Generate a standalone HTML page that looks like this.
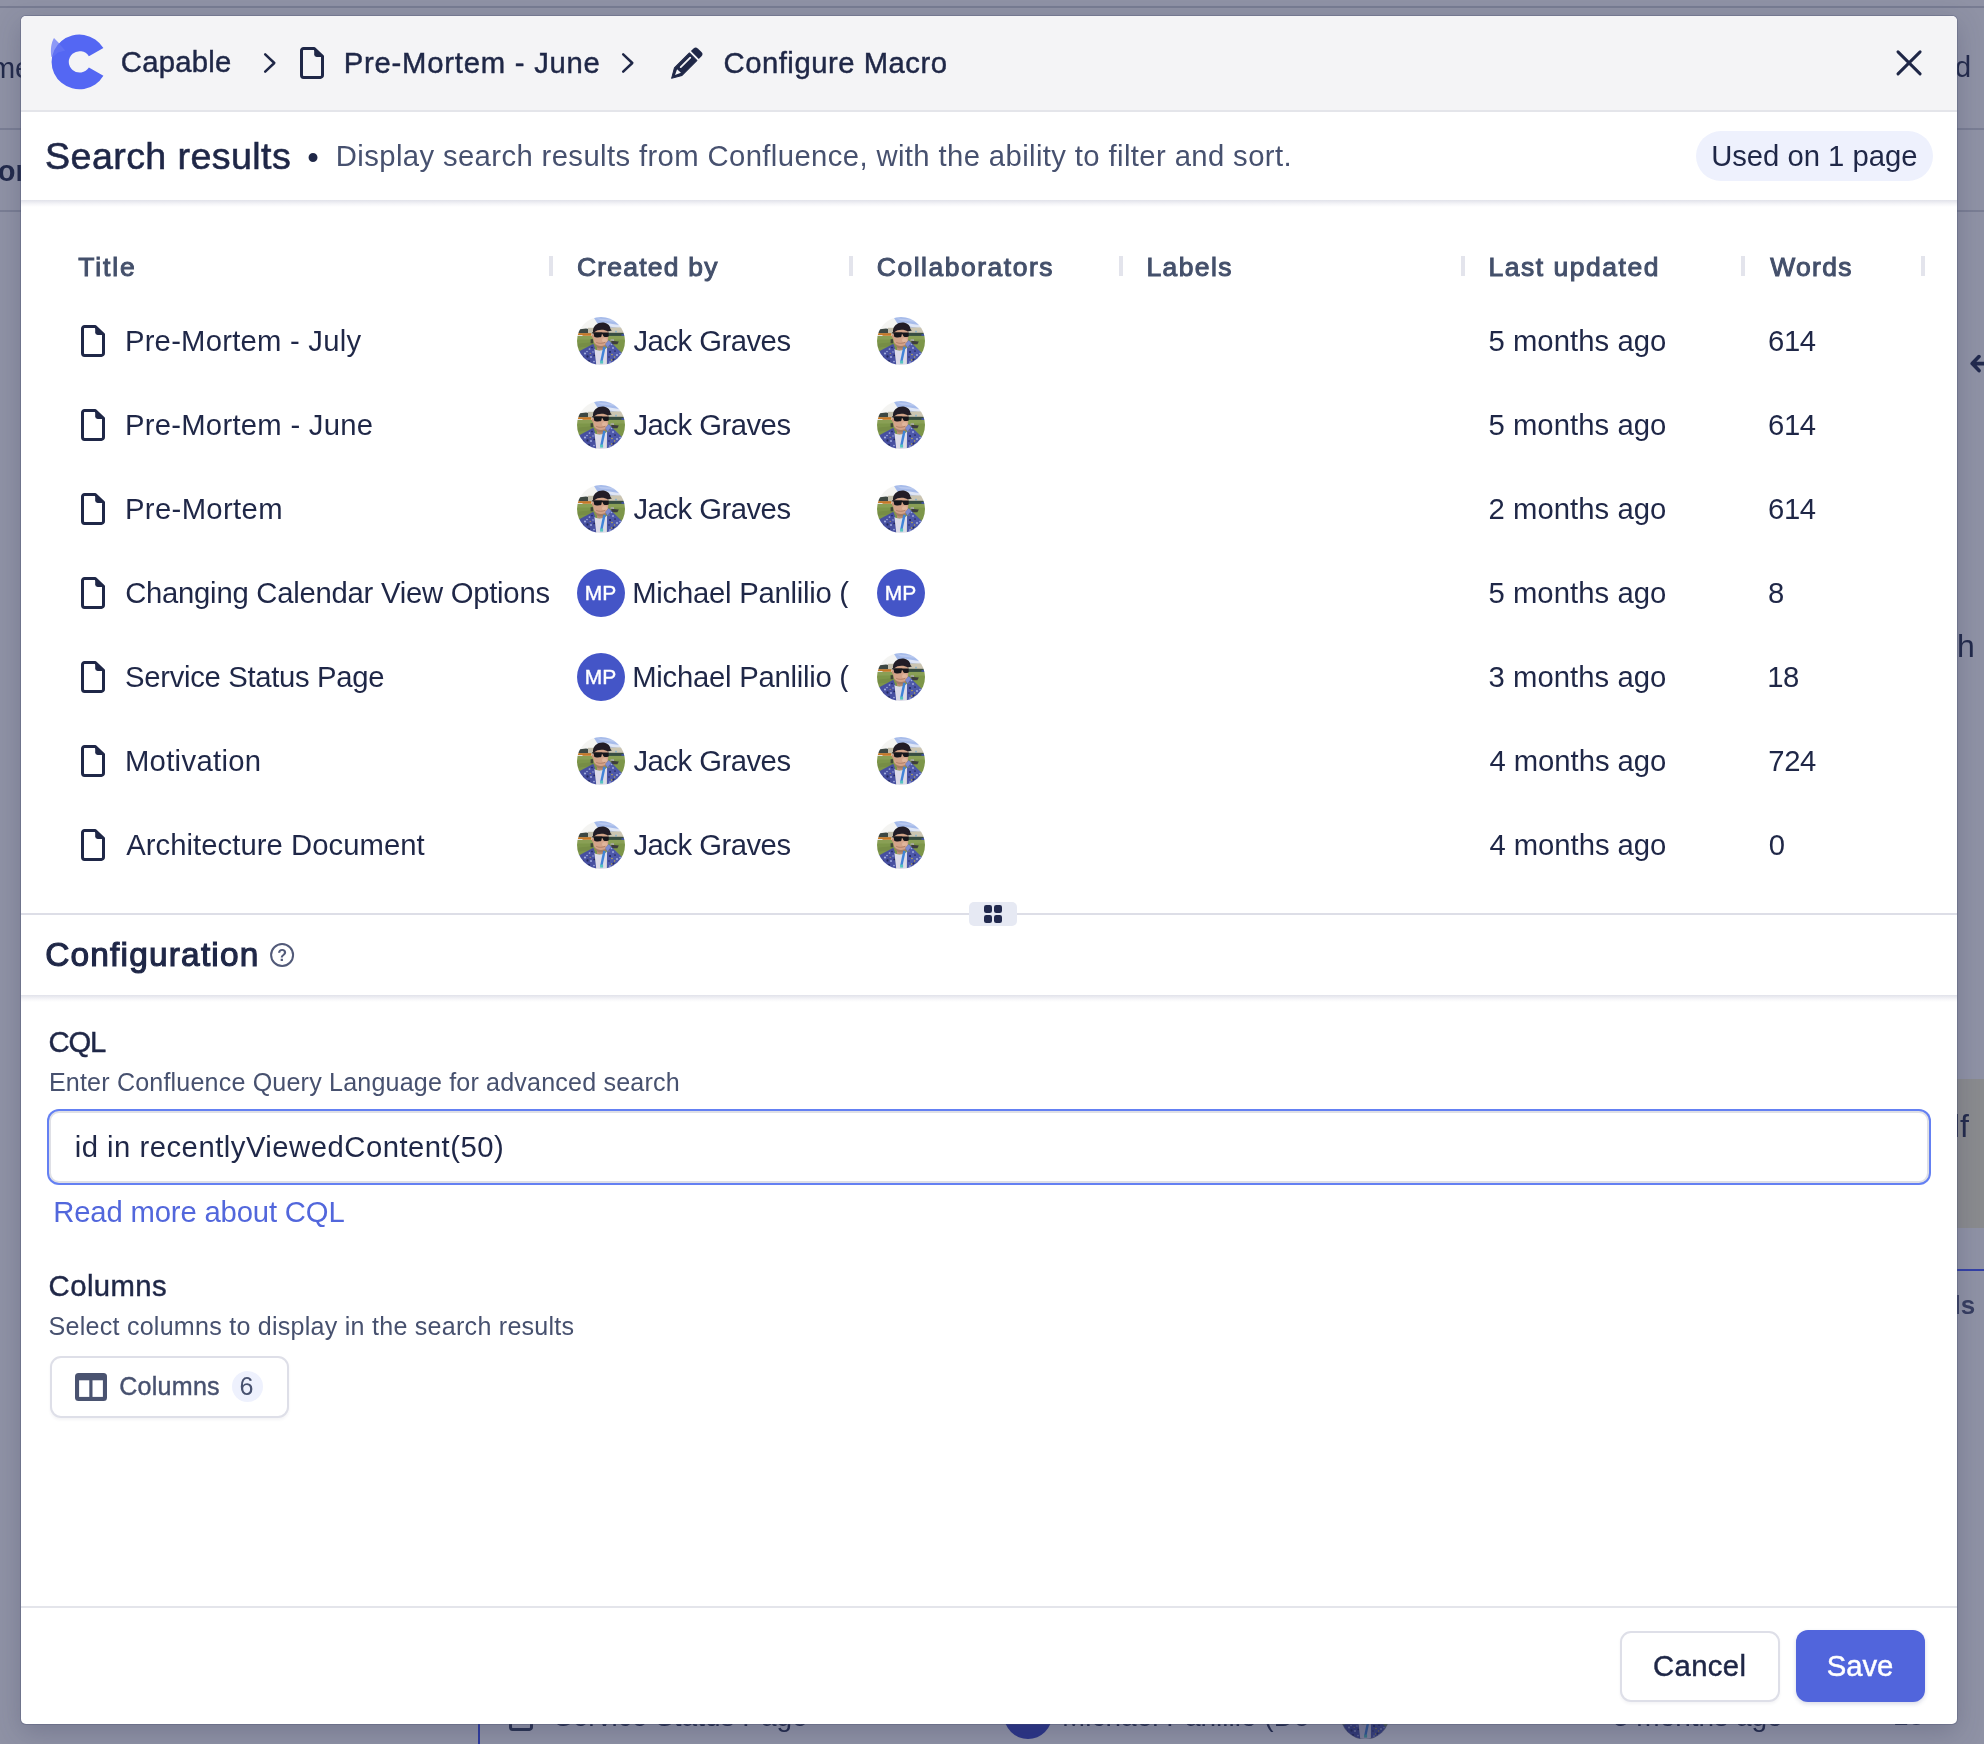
<!DOCTYPE html>
<html lang="en"><head><meta charset="utf-8"><title>Configure Macro</title>
<style>
html,body{margin:0;padding:0}
body{width:1984px;height:1744px;overflow:hidden;position:relative;background:#8f92a5;font-family:"Liberation Sans",sans-serif}
.root{position:absolute;left:0;top:0;width:1984px;height:1744px;overflow:hidden;will-change:transform}
.t{position:absolute;line-height:1;white-space:pre;display:block}
.a{position:absolute}
.modal{left:21px;top:16px;width:1936px;height:1708px;background:#fff;border-radius:5px;box-shadow:0 0 0 1px rgba(70,75,110,.3),0 8px 26px rgba(45,50,85,.26);overflow:hidden}
.hdr{left:0;top:0;width:1936px;height:94px;background:#f4f4f6;border-bottom:2px solid #e4e5ea}
.sep{width:4px;height:20px;top:256px;background:#e3e4ec}
.btn{box-sizing:border-box;border:2px solid #dedfe8;border-radius:11px;background:#fff;box-shadow:0 2px 3px rgba(30,35,70,.05)}
.mp{width:48px;height:48px;border-radius:50%;background:#4455c7}
.bgt{position:absolute;line-height:1;white-space:pre;color:#222a4b}
</style></head>
<body><div class="root">
<svg width="0" height="0" style="position:absolute">
<defs>
<symbol id="pg" viewBox="0 0 24 32">
<path d="M3.6 1.5H14.3L22.5 9.3V28.3a2.1 2.1 0 0 1-2.1 2.1H3.6a2.1 2.1 0 0 1-2.1-2.1V3.6a2.1 2.1 0 0 1 2.1-2.1Z" fill="none" stroke="#1f2747" stroke-width="3" stroke-linejoin="round"/>
<path d="M14.2 1.2L23 9.9H16.6a2.4 2.4 0 0 1-2.4-2.4Z" fill="#1f2747"/>
</symbol>
<symbol id="chev" viewBox="0 0 14 22"><path d="M2.2 2.4L11.3 11L2.2 19.6" fill="none" stroke="#1f2747" stroke-width="2.5" stroke-linecap="round" stroke-linejoin="round"/></symbol>
<clipPath id="avc"><circle cx="24" cy="24" r="24"/></clipPath>
<filter id="avb" x="-10%" y="-10%" width="120%" height="120%"><feGaussianBlur stdDeviation="0.55"/></filter>
<symbol id="av" viewBox="0 0 48 48">
<g clip-path="url(#avc)"><g filter="url(#avb)">
<rect x="-3" y="-3" width="54" height="54" fill="#f4f4f2"/>
<path d="M14.5 -3H51V14H30L22 9Z" fill="#a6bbea"/>
<path d="M26 5.5L42 8L46 10.5L44 11.5L30 9Z" fill="#dfe6f6"/>
<path d="M20 1.5L34 2.5L40 5L24 3.5Z" fill="#b9c9ef"/>
<path d="M1 12.5L9 11.6L14.6 12.4V16.6H1Z" fill="#3d4643"/>
<rect x="11" y="10.8" width="6" height="5.6" fill="#c2bdab"/>
<rect x="-3" y="16.2" width="17.5" height="2.6" fill="#c67827"/>
<rect x="-1" y="18" width="6.5" height="2.1" fill="#ececee"/>
<rect x="31" y="10.4" width="20" height="6" fill="#cbc5b1"/>
<rect x="38" y="13.8" width="2" height="1.6" fill="#8fb3c9"/>
<rect x="31" y="15.8" width="20" height="3.2" fill="#374e43"/>
<rect x="44.5" y="17" width="4" height="3.4" fill="#3c4f9a"/>
<rect x="-3" y="18.9" width="54" height="33" fill="#7d964a"/>
<path d="M-3 18.9H51V22.5H-3Z" fill="#899f54"/>
<path d="M-3 27L16 25V29L-3 31Z" fill="#768d45"/>
<path d="M33.6 22.3H37V24H33.6Z" fill="#b0b1ac"/>
<path d="M34.2 23.8L41.8 24.4L40.4 27.2H34.6Z" fill="#3c3e3d"/>
<rect x="13.6" y="22.2" width="2.6" height="4" fill="#3f4638"/>
<path d="M20 27H28V33H20Z" fill="#b98c73"/>
<path d="M16.2 13C16.2 11 31.2 11 31.2 13V21C31.2 25.5 28.5 31.2 24 31.2C19.5 31.2 16.2 25.5 16.2 21Z" fill="#d3a389"/>
<ellipse cx="27.6" cy="23.2" rx="2.6" ry="2.2" fill="#e0b59c"/>
<ellipse cx="15.8" cy="19" rx="1" ry="2" fill="#c99478"/>
<path d="M19.2 25.3C21 26.6 25.5 26.8 28.4 25.2" stroke="#a97761" stroke-width="0.8" fill="none"/>
<path d="M17.6 26C19 30.6 21.5 31.6 24 31.6C26.6 31.6 29 30 30.2 26.2C28 29.6 20.4 30 17.6 26Z" fill="#a27b65"/>
<path d="M16 15.4C14.8 3.4 32.8 2.2 33.4 12L34.8 13.6L30.8 14.4C27.4 12 20.4 12 17.4 15.2Z" fill="#201f25"/>
<path d="M15.2 15.3L24.6 15.2L26 15.6L31.8 15.5V19.2C31.8 20.2 27 20.4 26.4 19.2L25.6 17.2H24.8L24.4 19.6C24 20.8 17.6 20.8 17.2 19.4L16.6 16.6L15.2 16.4Z" fill="#19181c"/>
<path d="M-1 36L16.4 26.7L18.1 31.8L19.6 50H-1Z" fill="#4650a0"/>
<path d="M50 41L31.8 23.2L28.4 27L30.1 30.5L29.8 50H50Z" fill="#4d59aa"/>
<path d="M28.4 27L31.8 23.2L34 26L30.3 30.5Z" fill="#7c8bcf"/>
<path d="M17.4 31.8C19 34.2 27 34.2 30.1 30.5L29.8 50H19.5Z" fill="#dddbe8"/>
<g fill="#a3ade0"><circle cx="5" cy="44" r="0.9"/><circle cx="10" cy="34.5" r="0.8"/><circle cx="38" cy="44" r="0.9"/><circle cx="42" cy="41" r="0.8"/><circle cx="34.5" cy="27.5" r="0.8"/><circle cx="9" cy="46" r="0.9"/><circle cx="43" cy="36.5" r="0.8"/><circle cx="8" cy="36.5" r="1.08"/><circle cx="12.5" cy="32" r="0.86"/><circle cx="14" cy="40" r="1.01"/><circle cx="17" cy="44.5" r="0.86"/><circle cx="36" cy="31" r="0.94"/><circle cx="40" cy="38" r="1.01"/><circle cx="33" cy="45" r="0.86"/><circle cx="16" cy="35" r="0.72"/></g>
<g fill="#252a63"><circle cx="10.5" cy="39.5" r="1.15"/><circle cx="15" cy="30.5" r="0.86"/><circle cx="12" cy="44" r="1.08"/><circle cx="17.2" cy="38.4" r="0.86"/><circle cx="33" cy="35" r="1.08"/><circle cx="38" cy="34" r="0.86"/><circle cx="36.5" cy="42.5" r="1.08"/><circle cx="32" cy="40" r="0.79"/><circle cx="6" cy="40" r="0.86"/></g>
<g fill="#c3ae47"><circle cx="35" cy="37.5" r="0.79"/><circle cx="37.6" cy="40" r="0.72"/><circle cx="34.6" cy="43" r="0.72"/><circle cx="32" cy="30" r="0.58"/><circle cx="13.2" cy="36.5" r="0.58"/></g>
<path d="M26.2 29.6L28.6 30.2L25.5 45L23.2 44.6Z" fill="#3f84d8"/>
<rect x="23.1" y="43.6" width="3" height="3" fill="#54c3bf"/>
</g></g>
</symbol>
</defs></svg>
<div class="a" style="left:0;top:6px;width:1984px;height:2px;background:#787c92"></div>
<div class="a" style="left:0;top:128.3px;width:1984px;height:1.8px;background:#7a7e94"></div>
<div class="a" style="left:0;top:210.4px;width:1984px;height:1.8px;background:#7a7e94"></div>
<div class="a" style="left:1957px;top:1079px;width:27px;height:148.5px;background:#8a8b8e"></div>
<div class="a" style="left:1957px;top:1269.3px;width:27px;height:1.8px;background:#3340a6"></div>
<div class="a" style="left:478px;top:1700px;width:2px;height:44px;background:#2d3aa0"></div>
<span class="bgt" style="left:-9.1px;top:54px;font-size:29px">me</span>
<span class="bgt" style="left:-2.3px;top:157px;font-size:29px;font-weight:700">or</span>
<span class="bgt" style="left:1955px;top:53.4px;font-size:29px">d</span>
<svg class="a" style="left:1966px;top:352px" width="18" height="24" viewBox="1966 352 18 24"><path d="M1972.2 363.6H1990M1979 356.6L1972.2 363.6L1979 370.6" fill="none" stroke="#222a4e" stroke-width="3.6" stroke-linecap="round" stroke-linejoin="round"/></svg>
<span class="bgt" style="left:1957px;top:630px;font-size:32px">h</span>
<span class="bgt" style="left:1953px;top:1110px;font-size:32px">lf</span>
<span class="bgt" style="left:1953.5px;top:1292px;font-size:26px;font-weight:700;color:#363d60">ls</span>
<span class="bgt" style="left:554px;top:1702.5px;font-size:28px">Service Status Page</span>
<span class="bgt" style="left:1062px;top:1702.5px;font-size:28px">Michael Panlilio (De</span>
<span class="bgt" style="left:1613px;top:1702.5px;font-size:28px">3 months ago</span>
<span class="bgt" style="left:1893px;top:1701.5px;font-size:28px">18</span>
<div class="a" style="left:1003.5px;top:1690.5px;width:48px;height:48px;border-radius:50%;background:#2a3487"></div>
<svg class="a" style="left:1341px;top:1690.5px" width="48" height="48"><use href="#av"/><circle cx="24" cy="24" r="24.5" fill="rgba(27,33,71,.5)"/></svg>
<svg class="a" style="left:508.5px;top:1698.5px;opacity:.9" width="24" height="32"><use href="#pg"/></svg>
<div class="a modal"><div class="a hdr"></div>
<div class="a" style="left:0;top:184px;width:1936px;height:7px;background:linear-gradient(#e1e2ea,#f6f6f9 60%,#fff)"></div>
<div class="a" style="left:0;top:897px;width:1936px;height:2px;background:#dddee7"></div>
<div class="a" style="left:0;top:979px;width:1936px;height:7px;background:linear-gradient(#e1e2ea,#f6f6f9 60%,#fff)"></div>
<div class="a" style="left:0;top:1590px;width:1936px;height:2px;background:#e4e5eb"></div>
</div>
<header>
<svg class="a" style="left:46px;top:30px" width="64" height="64" viewBox="46 30 64 64">
<path d="M51.4 57C50.2 49 51.4 42.5 54 37.9C57 41.5 62 46 68 51Z" fill="#8592f6"/>
<path d="M103.4 48.1A27.8 27.4 0 1 0 103.4 75.7L88.9 67.6A10.9 10.7 0 1 1 88.9 56.2Z" fill="#5467f3"/>
<path d="M54 37.9L65.2 50.6L58 52.5L51.6 58C50.4 50 51.4 43 54 37.9Z" fill="rgba(255,255,255,.07)"/>
</svg>
<span class="t" style="left:120.82px;top:48.00px;font-size:29.26px;letter-spacing:0.248px;color:#1f2747;-webkit-text-stroke:0.45px #1f2747;">Capable</span>
<svg class="a" style="left:262.6px;top:52px" width="14" height="22"><use href="#chev"/></svg>
<svg class="a" style="left:300px;top:47px" width="24" height="32"><use href="#pg"/></svg>
<span class="t" style="left:343.76px;top:49.00px;font-size:29.26px;letter-spacing:0.770px;color:#1f2747;-webkit-text-stroke:0.45px #1f2747;">Pre-Mortem - June</span>
<svg class="a" style="left:621px;top:52px" width="14" height="22"><use href="#chev"/></svg>
<svg class="a" style="left:662px;top:38px" width="50" height="50" viewBox="0 0 50 50">
<g transform="translate(9.2 40.7) rotate(-45)" fill="#1f2747">
<path d="M0.6 0L9.9 -5.35H31.1V5.35H9.9Z" stroke="#1f2747" stroke-width="1" stroke-linejoin="round"/>
<path d="M33.4 -5.6H37.2a3 3 0 0 1 3 3V2.6a3 3 0 0 1-3 3H33.4Z"/>
<path d="M14.9 -1.45H28.4" stroke="#f4f4f6" stroke-width="1.8" stroke-linecap="round" fill="none"/>
<path d="M10.9 -2.6L11.1 2.7L5.3 0.1Z" fill="#f4f4f6"/>
</g></svg>
<span class="t" style="left:723.52px;top:49.00px;font-size:29.26px;letter-spacing:0.517px;color:#1f2747;-webkit-text-stroke:0.45px #1f2747;">Configure Macro</span>
<svg class="a" style="left:1894px;top:48px" width="30" height="30" viewBox="1894 48 30 30"><path d="M1898 51.9L1920.1 73.9M1920.1 51.9L1898 73.9" stroke="#1f2747" stroke-width="3" stroke-linecap="round"/></svg>
</header>
<section class="titlebar">
<span class="t" style="left:45.11px;top:138.00px;font-size:37.62px;letter-spacing:0.400px;color:#1f2747;-webkit-text-stroke:0.6px #1f2747;">Search results</span>
<span class="t" style="left:307.2px;top:140.6px;font-size:33px;color:#1f2747">&#8226;</span>
<span class="t" style="left:335.82px;top:142.00px;font-size:29.26px;letter-spacing:0.388px;color:#47516f;">Display search results from Confluence, with the ability to filter and sort.</span>
<div class="a" style="left:1696px;top:131px;width:237px;height:50px;border-radius:25px;background:#eef1fd"></div>
<span class="t" style="left:1711.15px;top:142.00px;font-size:29.26px;letter-spacing:-0.016px;color:#1f2747;">Used on 1 page</span>
</section>
<section class="results">
<span class="t" style="left:78.18px;top:254.00px;font-size:26.44px;letter-spacing:1.899px;color:#44506b;-webkit-text-stroke:1.0px #44506b;">Title</span>
<span class="t" style="left:576.92px;top:254.00px;font-size:26.44px;letter-spacing:1.258px;color:#44506b;-webkit-text-stroke:1.0px #44506b;">Created by</span>
<span class="t" style="left:876.82px;top:254.00px;font-size:26.44px;letter-spacing:1.536px;color:#44506b;-webkit-text-stroke:1.0px #44506b;">Collaborators</span>
<span class="t" style="left:1146.47px;top:254.00px;font-size:26.44px;letter-spacing:1.425px;color:#44506b;-webkit-text-stroke:1.0px #44506b;">Labels</span>
<span class="t" style="left:1488.47px;top:254.00px;font-size:26.44px;letter-spacing:1.553px;color:#44506b;-webkit-text-stroke:1.0px #44506b;">Last updated</span>
<span class="t" style="left:1770.27px;top:254.00px;font-size:26.44px;letter-spacing:1.304px;color:#44506b;-webkit-text-stroke:1.0px #44506b;">Words</span>
<div class="a sep" style="left:549px"></div>
<div class="a sep" style="left:849px"></div>
<div class="a sep" style="left:1119px"></div>
<div class="a sep" style="left:1461px"></div>
<div class="a sep" style="left:1741px"></div>
<div class="a sep" style="left:1921px"></div>
<svg class="a" style="left:81px;top:325px" width="24" height="32"><use href="#pg"/></svg>
<span class="t" style="left:124.92px;top:327.00px;font-size:29.26px;letter-spacing:0.234px;color:#1f2747;">Pre-Mortem - July</span>
<svg class="a" style="left:577px;top:317px" width="48" height="48"><use href="#av"/></svg>
<span class="t" style="left:633.42px;top:327.00px;font-size:29.26px;letter-spacing:-0.494px;color:#1f2747;">Jack Graves</span>
<svg class="a" style="left:877px;top:317px" width="48" height="48"><use href="#av"/></svg>
<span class="t" style="left:1488.38px;top:327.00px;font-size:29.26px;letter-spacing:0.064px;color:#1f2747;">5 months ago</span>
<span class="t" style="left:1768.08px;top:327.00px;font-size:29.26px;letter-spacing:-0.407px;color:#1f2747;">614</span>
<svg class="a" style="left:81px;top:409px" width="24" height="32"><use href="#pg"/></svg>
<span class="t" style="left:124.92px;top:411.00px;font-size:29.26px;letter-spacing:0.269px;color:#1f2747;">Pre-Mortem - June</span>
<svg class="a" style="left:577px;top:401px" width="48" height="48"><use href="#av"/></svg>
<span class="t" style="left:633.42px;top:411.00px;font-size:29.26px;letter-spacing:-0.494px;color:#1f2747;">Jack Graves</span>
<svg class="a" style="left:877px;top:401px" width="48" height="48"><use href="#av"/></svg>
<span class="t" style="left:1488.38px;top:411.00px;font-size:29.26px;letter-spacing:0.064px;color:#1f2747;">5 months ago</span>
<span class="t" style="left:1768.08px;top:411.00px;font-size:29.26px;letter-spacing:-0.407px;color:#1f2747;">614</span>
<svg class="a" style="left:81px;top:493px" width="24" height="32"><use href="#pg"/></svg>
<span class="t" style="left:124.92px;top:495.00px;font-size:29.26px;letter-spacing:0.369px;color:#1f2747;">Pre-Mortem</span>
<svg class="a" style="left:577px;top:485px" width="48" height="48"><use href="#av"/></svg>
<span class="t" style="left:633.42px;top:495.00px;font-size:29.26px;letter-spacing:-0.494px;color:#1f2747;">Jack Graves</span>
<svg class="a" style="left:877px;top:485px" width="48" height="48"><use href="#av"/></svg>
<span class="t" style="left:1488.47px;top:495.00px;font-size:29.26px;letter-spacing:0.055px;color:#1f2747;">2 months ago</span>
<span class="t" style="left:1768.08px;top:495.00px;font-size:29.26px;letter-spacing:-0.407px;color:#1f2747;">614</span>
<svg class="a" style="left:81px;top:577px" width="24" height="32"><use href="#pg"/></svg>
<span class="t" style="left:125.17px;top:579.00px;font-size:29.26px;letter-spacing:-0.245px;color:#1f2747;">Changing Calendar View Options</span>
<div class="a mp" style="left:577px;top:569px"></div><span class="t" style="left:584.8px;top:581.8px;font-size:21px;color:#fff;letter-spacing:0px;-webkit-text-stroke:.4px #fff">MP</span>
<span class="t" style="left:632.22px;top:579.00px;font-size:29.26px;letter-spacing:-0.247px;color:#1f2747;width:216.8px;overflow:hidden;">Michael Panlilio (</span>
<div class="a mp" style="left:877px;top:569px"></div><span class="t" style="left:884.8px;top:581.8px;font-size:21px;color:#fff;letter-spacing:0px;-webkit-text-stroke:.4px #fff">MP</span>
<span class="t" style="left:1488.38px;top:579.00px;font-size:29.26px;letter-spacing:0.064px;color:#1f2747;">5 months ago</span>
<span class="t" style="left:1768.10px;top:579.00px;font-size:29.26px;letter-spacing:-0.407px;color:#1f2747;">8</span>
<svg class="a" style="left:81px;top:661px" width="24" height="32"><use href="#pg"/></svg>
<span class="t" style="left:125.06px;top:663.00px;font-size:29.26px;letter-spacing:-0.309px;color:#1f2747;">Service Status Page</span>
<div class="a mp" style="left:577px;top:653px"></div><span class="t" style="left:584.8px;top:665.8px;font-size:21px;color:#fff;letter-spacing:0px;-webkit-text-stroke:.4px #fff">MP</span>
<span class="t" style="left:632.22px;top:663.00px;font-size:29.26px;letter-spacing:-0.247px;color:#1f2747;width:216.8px;overflow:hidden;">Michael Panlilio (</span>
<svg class="a" style="left:877px;top:653px" width="48" height="48"><use href="#av"/></svg>
<span class="t" style="left:1488.54px;top:663.00px;font-size:29.26px;letter-spacing:0.049px;color:#1f2747;">3 months ago</span>
<span class="t" style="left:1767.26px;top:663.00px;font-size:29.26px;letter-spacing:-0.407px;color:#1f2747;">18</span>
<svg class="a" style="left:81px;top:745px" width="24" height="32"><use href="#pg"/></svg>
<span class="t" style="left:124.92px;top:747.00px;font-size:29.26px;letter-spacing:0.319px;color:#1f2747;">Motivation</span>
<svg class="a" style="left:577px;top:737px" width="48" height="48"><use href="#av"/></svg>
<span class="t" style="left:633.42px;top:747.00px;font-size:29.26px;letter-spacing:-0.494px;color:#1f2747;">Jack Graves</span>
<svg class="a" style="left:877px;top:737px" width="48" height="48"><use href="#av"/></svg>
<span class="t" style="left:1489.44px;top:747.00px;font-size:29.26px;letter-spacing:-0.033px;color:#1f2747;">4 months ago</span>
<span class="t" style="left:1768.27px;top:747.00px;font-size:29.26px;letter-spacing:-0.407px;color:#1f2747;">724</span>
<svg class="a" style="left:81px;top:829px" width="24" height="32"><use href="#pg"/></svg>
<span class="t" style="left:126.21px;top:831.00px;font-size:29.26px;letter-spacing:0.049px;color:#1f2747;">Architecture Document</span>
<svg class="a" style="left:577px;top:821px" width="48" height="48"><use href="#av"/></svg>
<span class="t" style="left:633.42px;top:831.00px;font-size:29.26px;letter-spacing:-0.494px;color:#1f2747;">Jack Graves</span>
<svg class="a" style="left:877px;top:821px" width="48" height="48"><use href="#av"/></svg>
<span class="t" style="left:1489.44px;top:831.00px;font-size:29.26px;letter-spacing:-0.033px;color:#1f2747;">4 months ago</span>
<span class="t" style="left:1768.85px;top:831.00px;font-size:29.26px;letter-spacing:-0.407px;color:#1f2747;">0</span>
</section>
<section class="config">
<div class="a" style="left:969px;top:902px;width:48px;height:24px;border-radius:5px;background:#e6e9f3"></div>
<div class="a" style="left:984.2px;top:905.4px;width:8.3px;height:8.1px;border-radius:2.2px;background:#222a4e"></div>
<div class="a" style="left:984.2px;top:914.8px;width:8.3px;height:8.1px;border-radius:2.2px;background:#222a4e"></div>
<div class="a" style="left:993.6px;top:905.4px;width:8.3px;height:8.1px;border-radius:2.2px;background:#222a4e"></div>
<div class="a" style="left:993.6px;top:914.8px;width:8.3px;height:8.1px;border-radius:2.2px;background:#222a4e"></div>
<span class="t" style="left:45.24px;top:938.00px;font-size:33.44px;letter-spacing:1.193px;color:#1f2747;-webkit-text-stroke:1.15px #1f2747;">Configuration</span>
<svg class="a" style="left:269px;top:942px" width="26" height="26" viewBox="0 0 26 26"><circle cx="13.1" cy="13" r="11" fill="none" stroke="#525a79" stroke-width="2"/><text x="13.1" y="19" text-anchor="middle" font-family="Liberation Sans, sans-serif" font-weight="700" font-size="16" fill="#525a79">?</text></svg>
<span class="t" style="left:48.62px;top:1028.00px;font-size:29.26px;letter-spacing:-1.202px;color:#1f2747;-webkit-text-stroke:0.45px #1f2747;">CQL</span>
<span class="t" style="left:48.91px;top:1070.00px;font-size:25.08px;letter-spacing:0.178px;color:#47516f;">Enter Confluence Query Language for advanced search</span>
<div class="a" style="left:49px;top:1111px;width:1876px;height:68px;border:2px solid #dfe0e6;border-radius:10px;box-shadow:0 0 0 2px #6480f3;background:#fff"></div>
<span class="t" style="left:74.74px;top:1133.00px;font-size:29.26px;letter-spacing:0.496px;color:#1f2747;">id in recentlyViewedContent(50)</span>
<span class="t" style="left:53.22px;top:1198.00px;font-size:29.26px;letter-spacing:-0.156px;color:#5267dc;">Read more about CQL</span>
<span class="t" style="left:48.62px;top:1272.00px;font-size:29.26px;letter-spacing:0.440px;color:#1f2747;-webkit-text-stroke:0.45px #1f2747;">Columns</span>
<span class="t" style="left:48.50px;top:1314.00px;font-size:25.08px;letter-spacing:0.245px;color:#47516f;">Select columns to display in the search results</span>
<div class="a btn" style="left:49.5px;top:1355.5px;width:239px;height:62.5px"></div>
<svg class="a" style="left:75px;top:1373px" width="32" height="28" viewBox="0 0 32 28"><rect width="32" height="28" rx="3.5" fill="#4a5370"/><rect x="4.1" y="7.3" width="10.2" height="16.6" fill="#fff"/><rect x="17.5" y="7.3" width="10.4" height="16.6" fill="#fff"/></svg>
<span class="t" style="left:119.16px;top:1374.00px;font-size:25.08px;letter-spacing:0.251px;color:#47516f;-webkit-text-stroke:0.4px #47516f;">Columns</span>
<div class="a" style="left:232px;top:1371.3px;width:31px;height:31px;border-radius:50%;background:#eef1fd"></div>
<span class="t" style="left:239.40px;top:1374.00px;font-size:25.08px;letter-spacing:0.000px;color:#47516f;">6</span>
</section>
<footer>
<div class="a btn" style="left:1619.5px;top:1630.5px;width:160px;height:71px"></div>
<span class="t" style="left:1653.02px;top:1652.00px;font-size:29.26px;letter-spacing:0.377px;color:#1f2747;-webkit-text-stroke:0.45px #1f2747;">Cancel</span>
<div class="a" style="left:1796px;top:1630px;width:129px;height:72px;border-radius:12px;background:#5165dc;box-shadow:0 2px 4px rgba(40,50,120,.18)"></div>
<span class="t" style="left:1826.84px;top:1652.00px;font-size:29.26px;letter-spacing:-0.050px;color:#ffffff;-webkit-text-stroke:0.45px #ffffff;">Save</span>
</footer>
</div></body></html>
